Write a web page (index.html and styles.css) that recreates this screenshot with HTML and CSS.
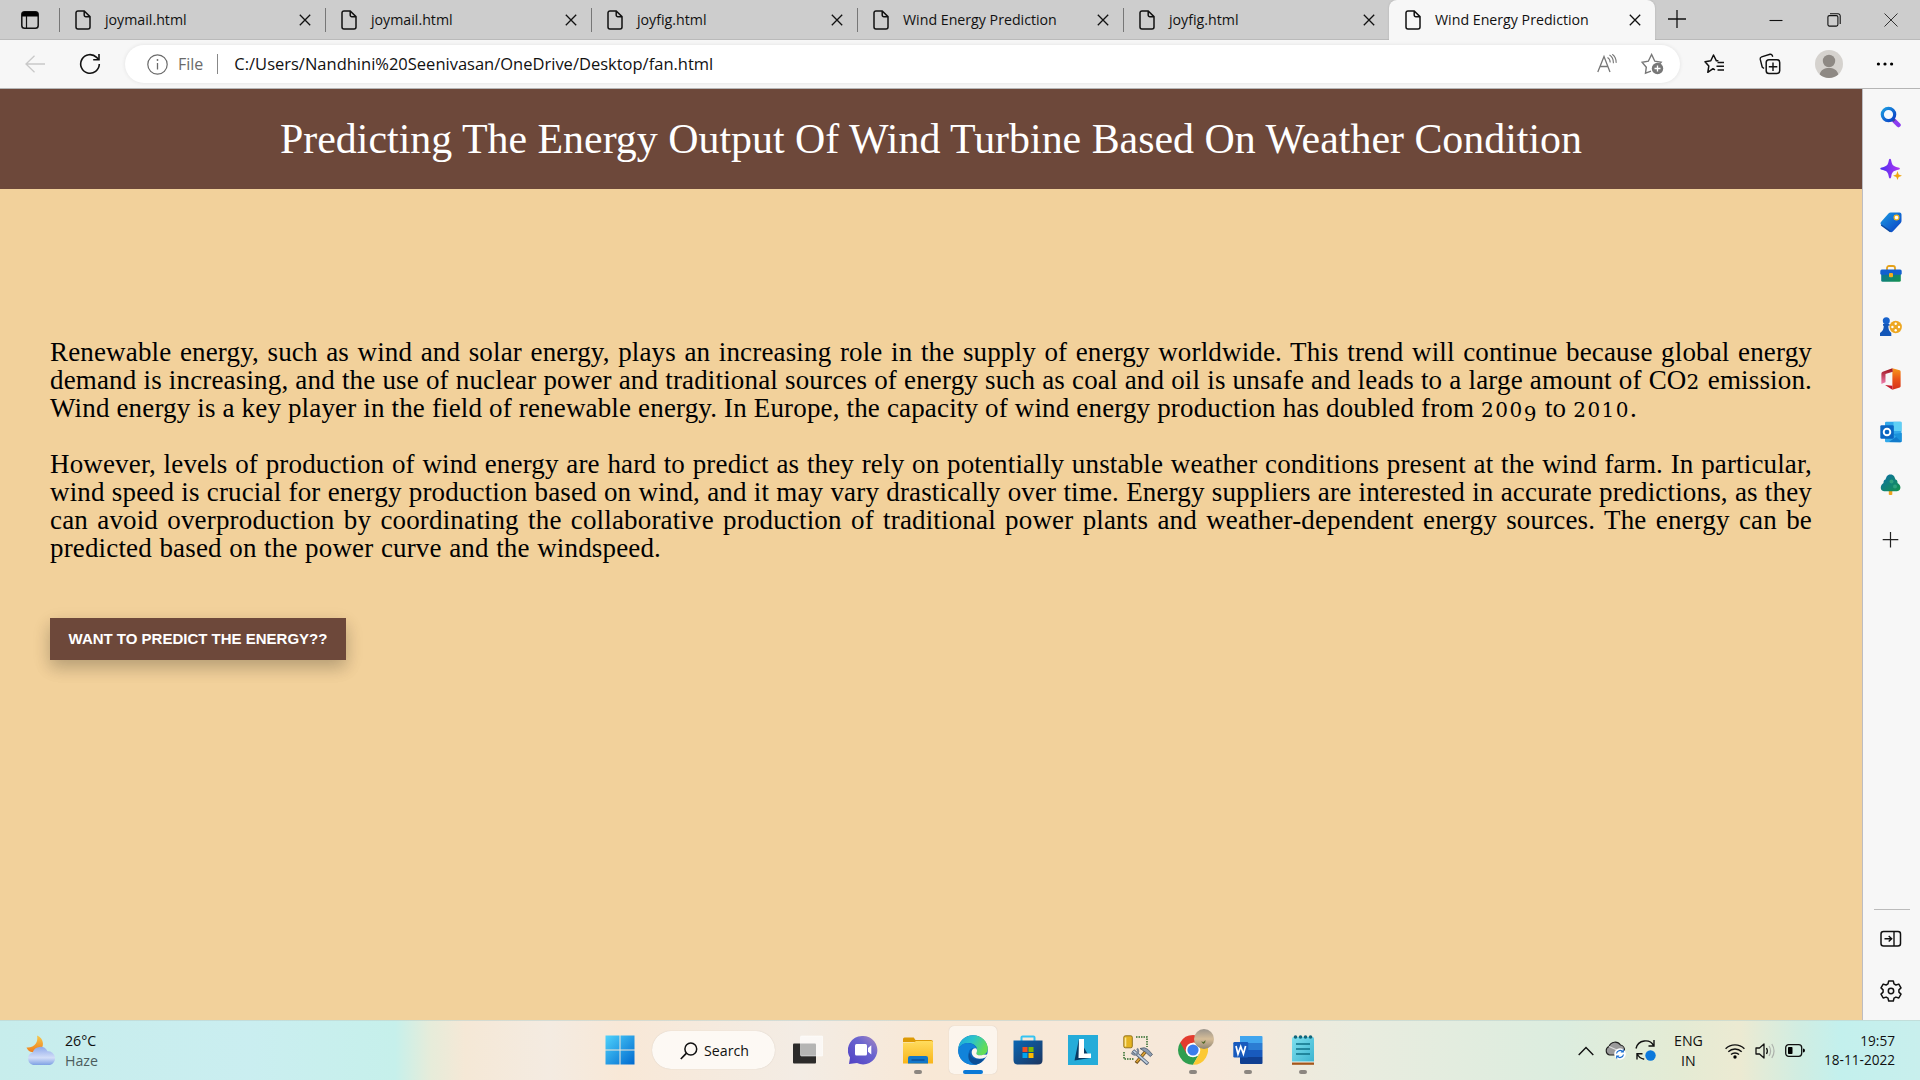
FILE: index.html
```html
<!DOCTYPE html>
<html lang="en">
<head>
<meta charset="utf-8">
<title>Wind Energy Prediction</title>
<link rel="stylesheet" href="styles.css">
</head>
<body>
<svg class="defs" width="0" height="0">
  <defs>
    <symbol id="doc" viewBox="0 0 16 20"><path d="M3 .9h6.2L15 6.6V17a2 2 0 0 1-2 2H3a2 2 0 0 1-2-2V3A2 2 0 0 1 3 .9zM9.2 1v4a1.7 1.7 0 0 0 1.700 1.700H15" fill="none" stroke="#111" stroke-width="1.500"/></symbol>
    <symbol id="x" viewBox="0 0 12 12"><path d="M.8.8l10.400 10.400M11.200.8L.8 11.200" stroke="#111" stroke-width="1.300"/></symbol>
    <linearGradient id="blue" x1="0" y1="0" x2="1" y2="1"><stop offset="0" stop-color="#1b9de2"/><stop offset="1" stop-color="#0a3cc4"/></linearGradient>
    <linearGradient id="win" x1="0" y1="0" x2="1" y2="1"><stop offset="0" stop-color="#4fd2fb"/><stop offset="1" stop-color="#0069cf"/></linearGradient>
    <linearGradient id="purple" x1="0" y1="0" x2="1" y2="0"><stop offset="0" stop-color="#4a2ff0"/><stop offset="1" stop-color="#b436f2"/></linearGradient>
    <linearGradient id="green" x1="0" y1="0" x2="1" y2="1"><stop offset="0" stop-color="#0b6fa8"/><stop offset="1" stop-color="#15934b"/></linearGradient>
    <linearGradient id="office" x1="0" y1="0" x2="0" y2="1"><stop offset="0" stop-color="#f79a1c"/><stop offset=".5" stop-color="#ea5417"/><stop offset="1" stop-color="#d6301a"/></linearGradient>
    <linearGradient id="officeSide" x1="0" y1="0" x2="0" y2="1"><stop offset="0" stop-color="#9c0f17"/><stop offset="1" stop-color="#f07fb0"/></linearGradient>
    <linearGradient id="folder" x1="0" y1="0" x2="0" y2="1"><stop offset="0" stop-color="#ffdc5e"/><stop offset="1" stop-color="#f9b51a"/></linearGradient>
    <linearGradient id="chat" x1="1" y1="0" x2="0" y2="1"><stop offset="0" stop-color="#a98bc0"/><stop offset=".4" stop-color="#6a64cf"/><stop offset="1" stop-color="#5040c4"/></linearGradient>
    <linearGradient id="edgeTop" x1="0" y1="0" x2="1" y2=".4"><stop offset="0" stop-color="#1aa5e0"/><stop offset=".5" stop-color="#2cc4c9"/><stop offset="1" stop-color="#63dd56"/></linearGradient>
    <linearGradient id="store" x1="0" y1="0" x2="1" y2="1"><stop offset="0" stop-color="#0a67b4"/><stop offset="1" stop-color="#1c3560"/></linearGradient>
    <linearGradient id="moon" x1="0" y1="0" x2="0" y2="1"><stop offset="0" stop-color="#f6c94c"/><stop offset="1" stop-color="#f07d1c"/></linearGradient>
    <linearGradient id="cloud" x1="0" y1="0" x2="0" y2="1"><stop offset="0" stop-color="#8faaea"/><stop offset=".6" stop-color="#d3def8"/><stop offset="1" stop-color="#7ea1e4"/></linearGradient>
    <linearGradient id="note" x1="0" y1="0" x2="1" y2="1"><stop offset="0" stop-color="#7fe0ee"/><stop offset="1" stop-color="#3bb3d0"/></linearGradient>
    <linearGradient id="photo" x1="0" y1="0" x2="0" y2="1"><stop offset="0" stop-color="#9a948c"/><stop offset=".5" stop-color="#d6bd98"/><stop offset="1" stop-color="#8f8674"/></linearGradient>
  </defs>
</svg>

<header class="tabs">
  <div class="tab-menu"><svg width="18" height="18" viewBox="0 0 18 18"><rect x=".8" y=".8" width="16.400" height="16.400" rx="2.800" fill="none" stroke="#111" stroke-width="1.500"/><path d="M1 5.500V3a2 2 0 0 1 2-2h12a2 2 0 0 1 2 2v2.500z" fill="#000"/><path d="M5.500 5v12" stroke="#111" stroke-width="1.200"/></svg></div>
  <div class="tab"><svg class="doc"><use href="#doc"/></svg><span>joymail.html</span><svg class="close"><use href="#x"/></svg></div>
  <div class="tab"><svg class="doc"><use href="#doc"/></svg><span>joymail.html</span><svg class="close"><use href="#x"/></svg></div>
  <div class="tab"><svg class="doc"><use href="#doc"/></svg><span>joyfig.html</span><svg class="close"><use href="#x"/></svg></div>
  <div class="tab"><svg class="doc"><use href="#doc"/></svg><span>Wind Energy Prediction</span><svg class="close"><use href="#x"/></svg></div>
  <div class="tab"><svg class="doc"><use href="#doc"/></svg><span>joyfig.html</span><svg class="close"><use href="#x"/></svg></div>
  <div class="tab active"><svg class="doc"><use href="#doc"/></svg><span>Wind Energy Prediction</span><svg class="close"><use href="#x"/></svg></div>
  <svg class="new-tab" width="18" height="18" viewBox="0 0 18 18"><path d="M9 0v18M0 9h18" stroke="#111" stroke-width="1.300"/></svg>
  <div class="window-buttons">
    <svg width="14" height="14" viewBox="0 0 14 14"><path d="M.5 7.500h13" stroke="#111" stroke-width="1.100"/></svg>
    <svg width="14" height="14" viewBox="0 0 14 14"><rect x=".9" y="2.600" width="10" height="10.500" rx="1.500" fill="none" stroke="#111" stroke-width="1.100"/><path d="M3 .8h8a2.200 2.200 0 0 1 2.200 2.200v8" fill="none" stroke="#111" stroke-width="1.100"/></svg>
    <svg width="14" height="14" viewBox="0 0 14 14"><path d="M.5.5l13 13M13.500.5l-13 13" stroke="#333" stroke-width="1"/></svg>
  </div>
</header>

<nav class="toolbar">
  <svg class="back" width="20" height="18" viewBox="0 0 20 18"><path d="M9.500 .8L1 9l8.500 8.200M1 9h19" fill="none" stroke="#c9c9c9" stroke-width="1.300"/></svg>
  <svg class="reload" width="22" height="22" viewBox="0 0 22 22"><path d="M20.300 11a9.300 9.300 0 1 1-2.700-6.600L19.500 6.300" fill="none" stroke="#111" stroke-width="1.600"/><path d="M20 1v5.800h-5.800" fill="none" stroke="#111" stroke-width="1.600"/></svg>
  <div class="address">
    <svg width="21" height="21" viewBox="0 0 21 21"><circle cx="10.500" cy="10.500" r="9.700" fill="none" stroke="#6a6a6a" stroke-width="1.200"/><path d="M10.500 9v6.500" stroke="#6a6a6a" stroke-width="1.300"/><circle cx="10.500" cy="6" r=".9" fill="#6a6a6a"/></svg>
    <span class="scheme">File</span>
    <span class="url">C:/Users/Nandhini%20Seenivasan/OneDrive/Desktop/fan.html</span>
    <svg class="read" width="20" height="20" viewBox="0 0 20 20"><path d="M.8 18L7 2.500 13 18M3 12.500h8" fill="none" stroke="#777" stroke-width="1.300"/><path d="M10.500 3.500c1.800 1 2.700 3 2.700 5M12.500 1c2.400 1.400 4 4.200 3.900 8.200M15.300.3c2.700 2 4 5 3.800 8.600" fill="none" stroke="#777" stroke-width="1.100"/></svg>
    <svg class="star-add" width="23" height="22" viewBox="0 0 23 22"><path d="M10 18.200l-5.500 2 .8-6L1 9.200l6.300-1L10.600 1.500l3.200 6.700 6.300 1-1.600 1.800" fill="none" stroke="#777" stroke-width="1.400"/><circle cx="16.500" cy="15.500" r="5.700" fill="#777"/><path d="M16.500 12.500v6M13.500 15.500h6" stroke="#fff" stroke-width="1.300"/></svg>
  </div>
  <div class="actions">
    <svg width="22" height="20" viewBox="0 0 22 20"><path d="M11 15.800l-2-1.100-5.200 3.600 1-6.200L1 7.700l5.800-.9L9.500 1l2.900 5.800h2" fill="none" stroke="#111" stroke-width="1.500" stroke-linejoin="round"/><path d="M13.500 8.500H20M12.500 12.200H20M13.500 16H20" stroke="#111" stroke-width="1.400"/></svg>
    <svg width="22" height="22" viewBox="0 0 22 22"><path d="M5 15.500L3.200 14 1.200 6.200Q.9 4.300 2.600 3.800L11 1.300q1.700-.3 2.300 1.200l.4 1.300" fill="none" stroke="#111" stroke-width="1.400"/><rect x="7.200" y="6.700" width="13.500" height="13.800" rx="2.800" fill="none" stroke="#111" stroke-width="1.500"/><path d="M14 9.500v8.500M9.800 13.700h8.500" stroke="#111" stroke-width="1.400"/></svg>
    <svg width="28" height="28" viewBox="0 0 28 28"><circle cx="14" cy="14" r="14" fill="#d5d2ce"/><circle cx="14" cy="11" r="6.200" fill="#8e8984"/><path d="M4.700 24.500c1-5 5-6.500 9.300-6.500s8.300 1.500 9.300 6.500A14 14 0 0 1 14 28a14 14 0 0 1-9.300-3.500z" fill="#8e8984"/></svg>
    <svg width="18" height="4" viewBox="0 0 18 4"><circle cx="2.400" cy="2" r="1.600"/><circle cx="9" cy="2" r="1.600"/><circle cx="15.600" cy="2" r="1.600"/></svg>
  </div>
</nav>

<div class="workspace">
  <main class="page">
    <h1>Predicting The Energy Output Of Wind Turbine Based On Weather Condition</h1>
    <section class="content">
      <p>
        <span class="line">Renewable energy, such as wind and solar energy, plays an increasing role in the supply of energy worldwide. This trend will continue because global energy</span>
        <span class="line">demand is increasing, and the use of nuclear power and traditional sources of energy such as coal and oil is unsafe and leads to a large amount of CO<span class="num">2</span> emission.</span>
        <span class="line end-a">Wind energy is a key player in the field of renewable energy. In Europe, the capacity of wind energy production has doubled from <span class="num">200<span class="low">9</span></span> to <span class="num">2010</span>.</span>
      </p>
      <p>
        <span class="line">However, levels of production of wind energy are hard to predict as they rely on potentially unstable weather conditions present at the wind farm. In particular,</span>
        <span class="line">wind speed is crucial for energy production based on wind, and it may vary drastically over time. Energy suppliers are interested in accurate predictions, as they</span>
        <span class="line">can avoid overproduction by coordinating the collaborative production of traditional power plants and weather-dependent energy sources. The energy can be</span>
        <span class="line end-b">predicted based on the power curve and the windspeed.</span>
      </p>
      <button class="predict">WANT TO PREDICT THE ENERGY??</button>
    </section>
  </main>
  <aside class="sidebar">
    <svg viewBox="0 0 22 22"><path d="M13 13.500l5.500 5.500" stroke="#8b3cf0" stroke-width="4.500" stroke-linecap="round"/><path d="M12 12.500l2.500 2.500" stroke="#4b4b8c" stroke-width="3"/><circle cx="8.500" cy="8.500" r="6.200" fill="#f5faff" stroke="url(#blue)" stroke-width="3.200"/></svg>
    <svg viewBox="0 0 22 22"><path d="M10 .8c.8 0 1 .8 1.300 2.200.8 3.800 1.600 4.800 5 5.900 3 .9 3.600.8 3.600 1.700s-.7.900-3.600 1.700c-3.400 1.100-4.200 2.100-5 5.900-.3 1.400-.5 2.200-1.300 2.200s-1-.8-1.300-2.200c-.8-3.800-1.600-4.800-5-5.900C.8 11.500.3 11.500.3 10.600s.5-.8 3.400-1.700c3.400-1.100 4.200-2.100 5-5.900C9 1.600 9.200.8 10 .8z" fill="url(#purple)"/><path d="M17.500 13l1.200 3.500 3.300 1.200-3.300 1.200-1.200 3.100-1.200-3.100-3.300-1.200 3.300-1.200z" fill="#f0a511"/></svg>
    <svg viewBox="0 0 22 22"><path d="M11 1.500h8.500a2 2 0 0 1 2 2V10a3 3 0 0 1-.8 2L13 20.300a2.500 2.500 0 0 1-3.500 0L1.200 14a2.500 2.500 0 0 1 0-3.300L8.500 2.500a3 3 0 0 1 2.500-1z" fill="url(#blue)"/><path d="M1.200 14L10.500 20.700" fill="none" stroke="#0b4aa2" stroke-width="1.500"/><circle cx="16.500" cy="6.500" r="2.400" fill="#fff" stroke="#f5b71b" stroke-width="1.200"/></svg>
    <svg viewBox="0 0 22 22"><path d="M7 7V5a2 2 0 0 1 2-2h4a2 2 0 0 1 2 2v2" fill="none" stroke="#e5a21b" stroke-width="1.800"/><rect x="1.200" y="8" width="19.600" height="10.800" rx="1.500" fill="url(#green)"/><rect x=".3" y="6.500" width="21.400" height="5.200" rx="1.500" fill="#1360cf"/><rect x="9" y="10" width="4" height="4.300" rx="1" fill="#f3ae1c"/></svg>
    <svg viewBox="0 0 22 22"><circle cx="15.700" cy="11" r="6.200" fill="#eda722"/><g fill="#fff"><circle cx="15.700" cy="7.700" r="1.200"/><circle cx="15.700" cy="14.300" r="1.200"/><circle cx="12.400" cy="11" r="1.200"/><circle cx="19" cy="11" r="1.200"/></g><circle cx="6.300" cy="4.800" r="3.500" fill="#1762cc"/><path d="M3 8h6.500v1.800H8.300c0 3.500.8 5.200 3 7.200V20H0v-3c2.800-2 3.700-3.700 3.800-7.200H3z" fill="#1457b8"/></svg>
    <svg viewBox="0 0 22 24"><path d="M12.500.3L20.500 2.500q1 .4 1 1.500v16q0 1-1 1.400l-8 2.300V.3z" fill="url(#office)"/><path d="M12.500.3L2 4Q.5 4.600.5 6.300V17.500l4.500-2V6.500L13 4.200z" fill="url(#officeSide)"/><path d="M4.500 18.500l8 .8v4.400z" fill="#c2182b"/></svg>
    <svg viewBox="0 0 22 22"><rect x="5" y=".8" width="16.500" height="20.400" rx="1.200" fill="#32a9ea"/><path d="M13.500.8h8V10h-8z" fill="#5fd0f5"/><path d="M9 21l12.500-9v7.900a1.300 1.300 0 0 1-1.300 1.300z" fill="#127bcb"/><path d="M13 13l8.500 8V12z" fill="#1a93dc"/><rect x=".3" y="4.300" width="13.500" height="13.500" rx="1.200" fill="#0a66c2"/><circle cx="7" cy="11" r="3.300" fill="none" stroke="#fff" stroke-width="1.900"/></svg>
    <svg viewBox="0 0 22 22"><path d="M8.800 15h3.500v5.500q-1.700 1-3.500 0z" fill="#efa31d"/><path d="M10.500.5C14 .5 14.500 3 15.500 5.500c2 .5 2 2.500 2 3.500 4 2 4 8-.5 8.200H4C-.5 17 0 11 3.500 9c0-1 0-3 2-3.500C6.500 3 7 .5 10.500.5z" fill="url(#green)"/><circle cx="11.500" cy="7.500" r="2" fill="#2fa17e"/><circle cx="15" cy="12.500" r="2" fill="#2fa17e"/></svg>
    <svg class="add" viewBox="0 0 22 22"><path d="M10.500 3v15.500M2.700 10.700h15.600" stroke="#222" stroke-width="1.200"/></svg>
    <div class="sidebar-foot">
      <svg viewBox="0 0 22 22"><rect x="1" y="3.500" width="19.500" height="14.500" rx="2.500" fill="none" stroke="#111" stroke-width="1.500"/><path d="M14 3.500V18M4.500 10.800h7M8.700 8l3 2.800-3 2.800" fill="none" stroke="#111" stroke-width="1.400"/></svg>
      <svg viewBox="0 0 22 22"><path d="M8.700 1h4.600l.7 2.900 1.900 1.100 2.900-.9 2.200 3.800-2.100 2v2.200l2.100 2-2.200 3.900-2.900-.9-1.900 1.100-.7 2.800H8.700L8 18.200l-1.900-1.100-2.900.9L1 14.100l2.100-2V9.900L1 7.900l2.200-3.800 2.900.9L8 3.900z" fill="none" stroke="#111" stroke-width="1.500" stroke-linejoin="round"/><circle cx="11" cy="11" r="2.700" fill="none" stroke="#111" stroke-width="1.500"/></svg>
    </div>
  </aside>
</div>

<footer class="taskbar">
  <div class="weather">
    <svg width="31" height="31" viewBox="0 0 31 31"><path d="M11 .5C18 3 19.500 13 12 16.500 8 18.500 2 17 .5 12.500 9 13 12.500 7 11 .5z" fill="url(#moon)"/><path d="M7 30a6.500 6.500 0 0 1-.3-12.500 8 8 0 0 1 14.800-1.200 7 7 0 0 1 2.500 13.700z" fill="url(#cloud)"/></svg>
    <div class="weather-text"><span>26°C</span><span class="dim">Haze</span></div>
  </div>
  <div class="apps">
    <div class="app"><svg viewBox="0 0 30 30"><path d="M.5.500h14v14H.5zM15.500.500h14v14h-14zM.5 15.500h14v14H.5zM15.500 15.500h14v14h-14z" fill="url(#win)"/></svg></div>
    <div class="search"><svg width="18" height="18" viewBox="0 0 18 18"><circle cx="10.800" cy="7" r="5.900" fill="none" stroke="#111" stroke-width="1.500"/><path d="M6.500 11.200L.8 17" stroke="#111" stroke-width="1.700"/></svg>Search</div>
    <div class="app"><svg viewBox="0 0 30 30"><rect x="0" y="8.500" width="23" height="20" rx="1" fill="#2c2b2a"/><rect x="7.500" y="1" width="22.500" height="20" rx="1" fill="#fff" fill-opacity=".65" stroke="#fff" stroke-opacity=".5"/></svg></div>
    <div class="app"><svg viewBox="0 0 30 30"><path d="M15 1a14.200 14.200 0 1 1-6 27L1 29l1-6.500A14.200 14.200 0 0 1 15 1z" fill="url(#chat)"/><rect x="7" y="9" width="12" height="11.500" rx="1.500" fill="#fff"/><path d="M20 13l3.300-2.700v9.200L20 16.700z" fill="#fff"/></svg></div>
    <div class="app running"><svg viewBox="0 0 30 30"><path d="M0 7V4q0-1.500 1.500-1.500h9.200L12.500 5H28q2 0 2 2z" fill="#dd9a05"/><path d="M0 7.500h11L13 6h15.500Q30 6 30 7.500V28.500H0z" fill="url(#folder)"/><path d="M5 28.500V23q0-2 2-2h16q2 0 2 2v5.500z" fill="#1277c9"/><path d="M8.500 25h13" stroke="#0a4b94" stroke-width="1.300"/></svg></div>
    <div class="app current"><svg viewBox="0 0 30 30"><circle cx="15" cy="15" r="14.800" fill="#0d63b8"/><path d="M.3 14C1 5 8 .2 15 .2c9 0 14.800 7 14.800 13 0 5-3.500 7.300-7.300 7.300-3 0-4.700-1-4.700-2.200 0-1 1.200-1.500 1.200-3.800C19 10 13.500 7.500 9.500 8 5 8.400 1.500 11 .3 14z" fill="url(#edgeTop)"/><path d="M.2 15.500C1 11 5 8 9.500 8c5 0 8.500 3 8.900 5.500-6-2-9 3-7 8 1.500 4.500 5 7.500 8.600 7.700C8 32 0 24.500.2 15.500z" fill="#1183da"/><path d="M12 19c1 5 8 7 14.500 4-3 5-6.500 6.500-9.500 6.500-5-1-8-6-6-12z" fill="#0b4f97"/><path d="M18.400 13.500c-5-1.500-6 5-3 8 3.500 3 8 2.600 12 1L30 19.500l-4.500.3c-4 1.200-7.500.2-7.200-1.500.2-1 1.500-2.500.1-4.800z" fill="#fcf5ed"/></svg></div>
    <div class="app"><svg viewBox="0 0 30 30"><path d="M8.500 6V2.500q0-1 1-1h11q1 0 1 1V6" fill="none" stroke="#35c3f2" stroke-width="2"/><path d="M.5 5.500h29V25q0 4.500-4.500 4.500H5Q.5 29.500.5 25z" fill="url(#store)"/><path d="M9.500 12h5v5h-5z" fill="#f25022"/><path d="M15.500 12h5v5h-5z" fill="#7fba00"/><path d="M9.500 18h5v5h-5z" fill="#00a4ef"/><path d="M15.500 18h5v5h-5z" fill="#ffb900"/></svg></div>
    <div class="app"><svg viewBox="0 0 30 30"><path d="M0 0h30v30H0z" fill="#25acd9"/><path d="M11 4L6.500 25.500 22 23z" fill="#083a63"/><path d="M11 4h5v14.500h7V23H10.500z" fill="#fff"/></svg></div>
    <div class="app"><svg viewBox="0 0 30 30"><path d="M13 2h11v10M1 17v7h10" fill="none" stroke="#2f6b2b" stroke-width="1.500" stroke-dasharray="1.500 1"/><rect x=".8" y=".8" width="8.500" height="12" rx="1.500" fill="#e4b321" stroke="#8a6a14" stroke-width=".9"/><path d="M2.500 2.500v9" stroke="#fbe793" stroke-width="1.600"/><path d="M13 28l10-12" stroke="#6b4a12" stroke-width="3.400"/><path d="M13.500 27.200l9.500-11" stroke="#d9a034" stroke-width="1.800"/><path d="M10 15.500l15 13.500" stroke="#56657a" stroke-width="3.600"/><path d="M10.500 15.800l14 12.500" stroke="#c2d2e2" stroke-width="1.700"/><path d="M8.500 17.500q2 3.500 5.500 1.500 2.500-2.500 0-5.500" fill="none" stroke="#7a8797" stroke-width="2"/><path d="M17 13.500q5-2 8 1l4.500 5-2.200 2-5-4.500z" fill="#8e9db0" stroke="#4a5768" stroke-width=".8"/></svg></div>
    <div class="app running"><svg viewBox="0 0 30 30"><path d="M15 15h-2L2.200 7.500A14.800 14.800 0 0 0 15 29.800L21.500 18.500z" fill="#2f9e4f"/><path d="M15 15V7.500h12.900A14.800 14.800 0 0 1 15 29.800l6.500-11.300z" fill="#fcc934"/><path d="M15 15L8.500 18.500 2.200 7.500A14.800 14.800 0 0 1 27.900 7.500H15z" fill="#e33b2e"/><circle cx="15" cy="15" r="7.300" fill="#fff"/><circle cx="15" cy="15" r="5.600" fill="#3b7ded"/></svg><svg class="profile" viewBox="0 0 20 20"><circle cx="10" cy="10" r="10" fill="url(#photo)"/><path d="M7 12.500l2.500.5 2-2-.3 2.500-1.700 1.500z" fill="#566b2d"/></svg></div>
    <div class="app running"><svg viewBox="0 0 30 30"><path d="M7 1h21.500q1 0 1 1v6H7z" fill="#41a5ee"/><path d="M7 8h22.500v7H7z" fill="#2b7cd3"/><path d="M7 15h22.500v7H7z" fill="#185abd"/><path d="M7 22h22.500v6q0 1-1 1H8q-1 0-1-1z" fill="#103f91"/><rect x=".3" y="7" width="15" height="15.500" rx="1.200" fill="#185abd"/><path d="M3 11l2 8 2.700-7.500L10.400 19l2.200-8" fill="none" stroke="#fff" stroke-width="1.700"/></svg></div>
    <div class="app running"><svg viewBox="0 0 30 30"><rect x="4" y="2" width="22" height="26" rx="1.500" fill="url(#note)"/><path d="M4 27h22v2.800H4z" fill="#a4561b"/><path d="M4 26.500h22v1H4z" fill="#f5f5ee"/><path d="M8 9h14M8 14h14M8 19h14" stroke="#0f7288" stroke-width="1.700"/><g fill="#12667b"><circle cx="7.500" cy="2" r="1.800"/><circle cx="12.500" cy="2" r="1.800"/><circle cx="17.500" cy="2" r="1.800"/><circle cx="22.500" cy="2" r="1.800"/></g></svg></div>
  </div>
  <div class="tray">
    <svg class="chevron" width="16" height="10" viewBox="0 0 16 10"><path d="M.7 9L8 1.500 15.300 9" fill="none" stroke="#111" stroke-width="1.400"/></svg>
    <svg class="drive" width="21" height="19" viewBox="0 0 21 19"><path d="M4.500 14A4.500 4.500 0 0 1 4 5.500 6.500 6.500 0 0 1 15.500 4a5 5 0 0 1 4 5.500L15 14z" fill="#9b9b9b" stroke="#222" stroke-width="1.100"/><path d="M4 5.500l9 4" stroke="#ddd" stroke-width="1.200"/><circle cx="15" cy="13" r="5.800" fill="#fff"/><path d="M11.500 12.500a3.600 3.600 0 0 1 6.500-1.500M18.500 13.500a3.600 3.600 0 0 1-6.500 1.500M18.300 8.500V11h-2.500M11.700 17.500V15h2.500" fill="none" stroke="#1a6fd0" stroke-width="1.200"/></svg>
    <svg class="sync" width="21" height="21" viewBox="0 0 21 21"><path d="M1 8.500C3-.5 15-1.500 18.500 5.500M19 0v6h-5.500M2 19.500v-5.800h5.500M2.200 14c1.200 2.500 3.500 4.500 7 5.200" fill="none" stroke="#111" stroke-width="1.400"/><circle cx="15.500" cy="15.500" r="5.200" fill="#0b78db"/></svg>
    <div class="lang"><span>ENG</span><span>IN</span></div>
    <svg class="wifi" width="20" height="16" viewBox="0 0 20 16"><path d="M.6 5.800a13.300 13.300 0 0 1 18.800 0M3.300 8.700a9.500 9.500 0 0 1 13.400 0M6 11.600a5.700 5.700 0 0 1 8 0" fill="none" stroke="#111" stroke-width="1.400"/><circle cx="10" cy="14" r="1.700"/></svg>
    <svg class="volume" width="21" height="18" viewBox="0 0 21 18"><path d="M1 6h3.500L9 2v14l-4.500-4H1z" fill="none" stroke="#111" stroke-width="1.300" stroke-linejoin="round"/><path d="M11.500 6q1.700 3 0 6" fill="none" stroke="#111" stroke-width="1.300"/><path d="M14 4q3.200 5 0 10M16.800 2q4.500 7 0 14" fill="none" stroke="#999" stroke-width="1.200" stroke-opacity=".7"/></svg>
    <svg class="battery" width="20" height="13" viewBox="0 0 20 13"><rect x=".7" y=".7" width="16" height="11.600" rx="3" fill="none" stroke="#111" stroke-width="1.300"/><rect x="3" y="3" width="4.500" height="7" rx=".8"/><path d="M18 4.500q2 0 2 2t-2 2z"/></svg>
    <div class="clock"><span>19:57</span><span>18-11-2022</span></div>
  </div>
</footer>
</body>
</html>
```
FILE: styles.css
```css
* { box-sizing: border-box; }

body {
  margin: 0;
  width: 1920px;
  height: 1080px;
  overflow: hidden;
  display: flex;
  flex-direction: column;
  font: 14.2px/20px "Open Sans", "Noto Sans", sans-serif;
  color: #111;
  background: #f7f7f7;
}
svg { display: block; flex: none; }
.defs { position: absolute; }

/* Tab strip */
.tabs {
  height: 40px;
  flex: none;
  display: flex;
  background: #cdcdcd;
  box-shadow: inset 0 -1px #bababa;
}
.tab-menu {
  width: 59px;
  height: 40px;
  padding: 11px 0 0 21px;
}
.tab {
  width: 266px;
  height: 40px;
  display: flex;
  align-items: center;
  padding: 0 14px 0 16px;
  background: linear-gradient(#777, #777) 0 8px / 1px 24px no-repeat;
}
.tab span { margin-left: 14px; flex: 1; white-space: nowrap; }
.doc { width: 16px; height: 20px; }
.close { width: 12px; height: 12px; }
.tab.active {
  background: #f7f7f7;
  border-radius: 8px 8px 0 0;
  box-shadow: 0 0 2px #aaa;
}
.new-tab { margin: 10px 0 0 13px; }
.window-buttons {
  margin: 13px 22px 0 auto;
  display: flex;
  gap: 43.5px;
}

/* Toolbar */
.toolbar {
  height: 49px;
  flex: none;
  display: flex;
  align-items: center;
  padding: 0 26px 0 25px;
  background: #f7f7f7;
  border-bottom: 1px solid #b5b5b5;
}
.reload { margin-left: 34px; }
.address {
  width: 1555px;
  height: 38px;
  margin-left: 24px;
  padding: 0 16px 0 22px;
  display: flex;
  align-items: center;
  border-radius: 19px;
  background: #fff;
  box-shadow: 0 0 4px rgba(0, 0, 0, .09);
}
.scheme {
  margin-left: 10px;
  padding-right: 14px;
  border-right: 1px solid #888;
  font-size: 16px;
  color: #6a6a6a;
}
.url {
  margin-left: 16px;
  flex: 1;
  font-size: 16.5px;
}
.star-add { margin-left: 24px; }
.actions {
  flex: 1;
  margin-left: 24px;
  display: flex;
  align-items: center;
  justify-content: space-between;
}

/* Document and sidebar */
.workspace { flex: 1; min-height: 0; display: flex; }
.page { width: 1862px; background: #f2d19b; }
.page h1 {
  height: 100px;
  margin: 0;
  background: #6d483a;
  color: #fff;
  font: 400 41.9px/100px "Liberation Serif", serif;
  text-align: center;
  white-space: nowrap;
}
.content { padding: 149px 50px 0; }
.content p {
  margin: 0 0 28px;
  font: 400 27px/28px "Liberation Serif", serif;
  letter-spacing: .16px;
  color: #000;
}
.line {
  display: block;
  white-space: nowrap;
  text-align: justify;
  text-align-last: justify;
}
.line.end-a { width: 1580px; }
.line.end-b { width: 611px; }
.num {
  font: 20px/0 "DejaVu Serif", serif;
  letter-spacing: 1.500px;
}
.low { vertical-align: -4px; }
.predict {
  display: block;
  width: 296px;
  height: 42px;
  margin-top: 56px;
  padding: 0;
  border: 0;
  background: #6d483a;
  color: #fff;
  font: 700 15px/42px "Liberation Sans", sans-serif;
  box-shadow: 0 8px 16px rgba(0, 0, 0, .16), 0 6px 20px rgba(0, 0, 0, .1);
}
.sidebar {
  width: 58px;
  border-left: 1px solid #bdbdc2;
  padding: 16.500px 0 0 17px;
  display: flex;
  flex-direction: column;
  gap: 30.600px;
}
.sidebar svg { width: 22px; height: 22px; }
.sidebar .add { margin-top: 3px; }
.sidebar-foot {
  width: 36px;
  margin: auto 0 18px -6px;
  padding: 18px 0 0 6px;
  border-top: 1px solid #bbb;
  display: grid;
  gap: 30px;
}

/* Taskbar */
.taskbar {
  height: 60px;
  flex: none;
  display: grid;
  grid-template-columns: 592px 1fr 342px;
  border-top: 1px solid rgba(190, 210, 205, .6);
  background: linear-gradient(90deg, #c7edec 0, #caeef0 250px, #c6f0eb 395px, #e6ecda 430px, #f5e8d6 465px, #f4ebe1 550px, #f8e8d7 620px, #f3ece4 800px, #f8e8d6 930px, #f6e8da 1220px, #e9ecdf 1360px, #dceddf 1560px, #e4ebd4 1680px, #ecead2 1740px, #d0ede2 1800px, #c3f0ed 1840px, #c8efed 1920px);
}
.weather { display: flex; padding: 14px 0 0 26px; gap: 8px; }
.weather-text { display: flex; flex-direction: column; margin-top: -4px; }
.dim { color: #4c5d5d; }
.apps { display: flex; padding-top: 5px; }
.app {
  position: relative;
  width: 55px;
  height: 48px;
  padding: 9px 12.500px 0;
}
.app > svg { width: 30px; height: 30px; }
.app.running::after, .app.current::after {
  content: "";
  position: absolute;
  left: 24px;
  bottom: 0;
  width: 8px;
  height: 4px;
  border-radius: 2px;
  background: #8c8680;
}
.app.current {
  background: #fcf5ed;
  width: 48px;
  margin: 0 3.500px;
  padding: 9px;
  border-radius: 5px;
  box-shadow: 0 0 1px #c9bfb4;
}
.app.current::after { left: 14px; width: 20px; background: #0a78d6; }
.app > .profile {
  position: absolute;
  left: 29px;
  top: 3px;
  width: 20px;
  height: 20px;
}
.search {
  width: 123px;
  height: 38px;
  margin: 5px 5px 0;
  padding: 1px 0 0 2px;
  display: flex;
  align-items: center;
  justify-content: center;
  gap: 6px;
  border-radius: 19px;
  background: #fdf9f4;
  box-shadow: 0 0 1px #cbbfb2;
}
.tray { display: flex; align-items: center; padding-right: 25px; }
.drive { margin-left: 11px; }
.sync { margin-left: 9px; }
.lang { margin-left: 18px; display: grid; text-align: center; }
.wifi { margin-left: 22px; }
.volume { margin-left: 10px; }
.battery { margin-left: 9px; }
.clock { margin: -1px 0 0 auto; display: grid; line-height: 19.500px; font-size: 13.600px; text-align: right; }
```
